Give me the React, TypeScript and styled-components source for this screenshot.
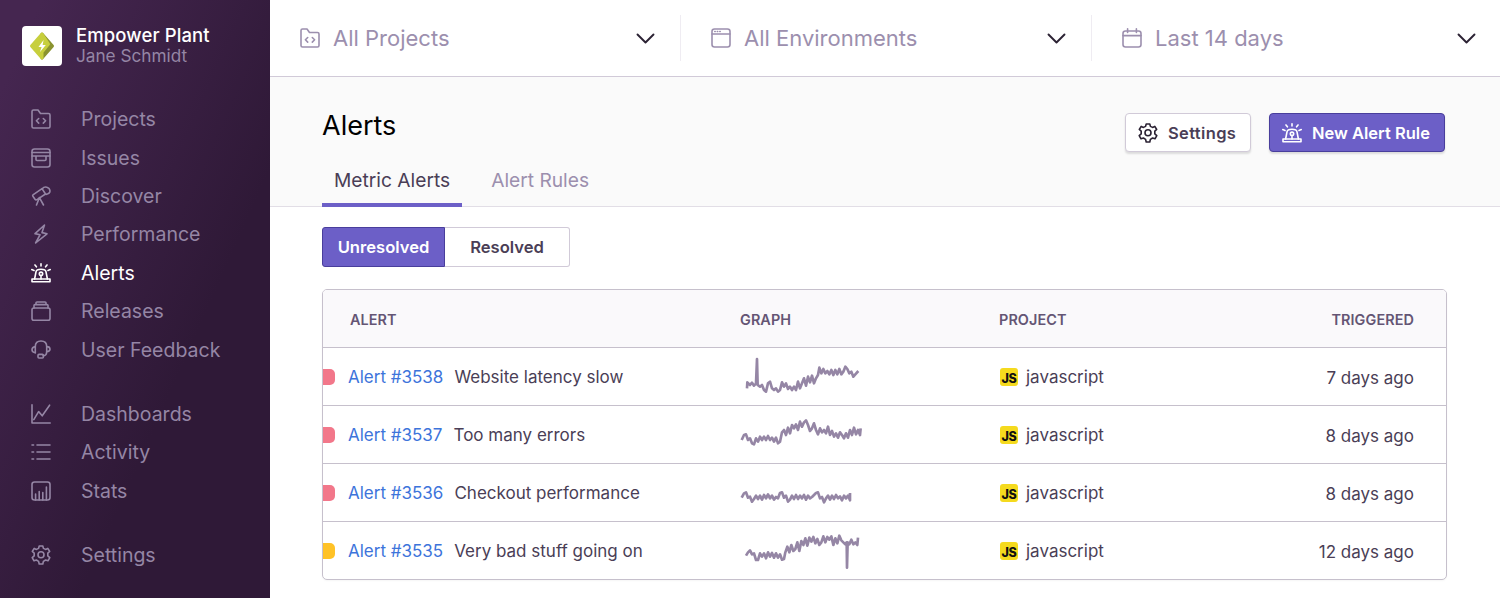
import React from "react";
import styled, { createGlobalStyle } from "styled-components";

const Global = createGlobalStyle`
  html, body { margin: 0; padding: 0; background: #fff; overflow: hidden; }
  * { box-sizing: border-box; }
  body { font-family: Inter, "Liberation Sans", sans-serif; }
`;

const Shell = styled.div`
  display: grid;
  grid-template-columns: 270px 1fr;
  height: 100vh;
  overflow: hidden;
`;

const Sidebar = styled.aside`
  background: linear-gradient(294deg, #2f1937 35.6%, #452650 92.4%);
  padding: 25px 0 0 22px;
  display: flex;
  flex-direction: column;
`;

const OrgHeader = styled.div`
  display: flex;
  align-items: center;
  gap: 14px;
  margin-bottom: 34px;
`;

const LogoBox = styled.div`
  width: 40px;
  height: 40px;
  background: #fff;
  border-radius: 4px;
  display: flex;
  align-items: center;
  justify-content: center;
`;

const OrgText = styled.div`
  display: flex;
  flex-direction: column;
`;

const OrgName = styled.div`
  color: #fff;
  font-size: 18.5px;
  font-weight: 500;
  line-height: 20px;
  letter-spacing: 0.1px;
`;

const OrgUser = styled.div`
  color: #9586a5;
  font-size: 17.2px;
  line-height: 21px;
`;

const NavGroup = styled.nav`
  display: flex;
  flex-direction: column;
  margin-bottom: 26px;
`;

const NavItem = styled.a<{ $active?: boolean }>`
  height: 38.4px;
  display: flex;
  align-items: center;
  gap: 30px;
  padding-left: 9px;
  font-size: 19.5px;
  color: ${(p) => (p.$active ? "#fff" : "#9586a5")};
`;

const NavIcon = styled.svg`
  width: 20px;
  height: 20px;
  flex: none;
  fill: none;
  stroke: currentColor;
  stroke-width: 1.6;
  stroke-linecap: round;
  stroke-linejoin: round;
`;

const Main = styled.main`
  display: flex;
  flex-direction: column;
  min-width: 0;
`;

const TopBar = styled.header`
  height: 77px;
  flex: none;
  display: grid;
  grid-template-columns: 411px 411px 1fr;
  align-items: center;
  background: #fff;
  border-bottom: 1px solid #d1cad8;
`;

const Selector = styled.div<{ $last?: boolean }>`
  height: 46px;
  display: flex;
  align-items: center;
  padding: 0 ${(p) => (p.$last ? "24px" : "25px")} 0 30px;
  gap: 13px;
  border-right: ${(p) => (p.$last ? "none" : "1px solid #efecf2")};
  color: #9c8fae;
`;

const SelectorLabel = styled.span`
  flex: 1;
  font-size: 22px;
  color: #9c8fae;
`;

const Chevron = styled.svg`
  width: 19px;
  height: 11px;
  fill: none;
  stroke: #2b2233;
  stroke-width: 1.9;
  stroke-linecap: round;
  stroke-linejoin: round;
`;

const PageHead = styled.section`
  height: 130px;
  flex: none;
  background: #fafafa;
  border-bottom: 1px solid #e2dee6;
  padding: 0 55px 0 52px;
  display: flex;
  flex-direction: column;
  justify-content: space-between;
`;

const TitleRow = styled.div`
  display: flex;
  align-items: flex-start;
  justify-content: space-between;
  height: 76px;
`;

const Title = styled.h1`
  margin: 31px 0 0;
  font-size: 27px;
  line-height: 36px;
  font-weight: 400;
  color: #000;
`;

const Actions = styled.div`
  display: flex;
  gap: 18px;
  align-items: center;
  margin-top: 36px;
`;

const Button = styled.button<{ $primary?: boolean }>`
  height: 39px;
  display: flex;
  align-items: center;
  gap: 10px;
  padding: 0 12px;
  width: ${(p) => (p.$primary ? "176px" : "126px")};
  white-space: nowrap;
  border-radius: 4px;
  font-family: inherit;
  font-size: 16.5px;
  font-weight: 600;
  letter-spacing: ${(p) => (p.$primary ? "0" : "0.35px")};
  border: 1px solid ${(p) => (p.$primary ? "#493e9c" : "#d1cad8")};
  background: ${(p) => (p.$primary ? "#6c5fc7" : "#fff")};
  color: ${(p) => (p.$primary ? "#fff" : "#4a3e56")};
  box-shadow: 0 2px 2px rgba(0, 0, 0, 0.12);
`;

const ButtonIcon = styled(NavIcon)<{ $dark?: boolean }>`
  color: ${(p) => (p.$dark ? "#2b2233" : "#fff")};
  stroke-width: 1.6;
`;

const Tabs = styled.div`
  display: flex;
  gap: 17px;
`;

const Tab = styled.div<{ $active?: boolean }>`
  height: 44px;
  padding: 4px 12px 0;
  font-size: 19.2px;
  line-height: 26px;
  color: ${(p) => (p.$active ? "#4a3e56" : "#9c8fae")};
  border-bottom: 4px solid ${(p) => (p.$active ? "#6c5fc7" : "transparent")};
  margin-bottom: -1px;
`;

const Content = styled.section`
  flex: 1;
  background: #fff;
  padding: 20px 53px 0 52px;
`;

const Segmented = styled.div`
  display: flex;
  width: 248px;
  margin-bottom: 22px;
`;

const Segment = styled.div<{ $active?: boolean }>`
  flex: ${(p) => (p.$active ? "0 0 123px" : "1")};
  height: 40px;
  display: flex;
  align-items: center;
  justify-content: center;
  font-size: 16.6px;
  font-weight: 600;
  color: ${(p) => (p.$active ? "#fff" : "#4a3e56")};
  background: ${(p) => (p.$active ? "#6c5fc7" : "#fff")};
  border: 1px solid ${(p) => (p.$active ? "#493e9c" : "#d1cad8")};
  border-radius: ${(p) => (p.$active ? "3px 0 0 3px" : "0 3px 3px 0")};
  ${(p) => !p.$active && "border-left: none;"}
`;

const Table = styled.div`
  border: 1px solid #c6c0cc;
  border-radius: 5px;
  overflow: hidden;
  background: #fff;
  box-shadow: 0 1px 2px rgba(0, 0, 0, 0.04);
`;

const HeaderRow = styled.div`
  display: grid;
  grid-template-columns: 417px 259px 1fr auto;
  height: 57px;
  align-items: center;
  padding: 2px 32px 0 0;
  background: #faf9fb;
  font-size: 14.4px;
  font-weight: 600;
  color: #645574;
  letter-spacing: 0.1px;
`;

const HeaderFirst = styled.div`
  padding-left: 27px;
`;

const Row = styled.div`
  display: grid;
  grid-template-columns: 417px 259px 1fr auto;
  height: 58px;
  align-items: center;
  padding: 0 32px 0 0;
  border-top: 1px solid #c6c0cc;
  font-size: 17px;
  color: #4a3e56;
`;

const AlertCell = styled.div`
  display: flex;
  align-items: center;
`;

const Pill = styled.span<{ $tone: string }>`
  width: 12px;
  height: 16px;
  border-radius: 0 5px 5px 0;
  background: ${(p) => p.$tone};
  margin-right: 13px;
`;

const AlertLink = styled.a`
  color: #3d74db;
  margin-right: 11px;
`;

const Spark = styled.svg`
  display: block;
  width: 130px;
  height: 58px;
  fill: none;
  stroke: #9586a5;
  stroke-width: 8;
  stroke-linejoin: round;
`;

const ProjectCell = styled.div`
  display: flex;
  align-items: center;
  gap: 8px;
  padding-left: 1px;
`;

const TimeCell = styled.div`
  padding-top: 2px;
`;

const JsBadge = styled.span`
  width: 18px;
  height: 18px;
  border-radius: 3px;
  background: #f5da1e;
  color: #111;
  font-size: 12.5px;
  font-weight: 800;
  display: flex;
  align-items: flex-end;
  justify-content: center;
  line-height: 15px;
  letter-spacing: -0.3px;
`;

const Logo = () => (
  <svg width="28" height="30" viewBox="0 0 28 30">
    <path d="M14 3 L24.5 15 L14 27 Z" fill="#8a9330" stroke="#8a9330" strokeWidth="3" strokeLinejoin="round" />
    <path d="M14 3 L3.5 15 L14 27 L14 21 L20.5 13 Z" fill="#c7cf3d" stroke="#c7cf3d" strokeWidth="3" strokeLinejoin="round" />
    <path d="M15.6 9 L10.5 16 H13.6 L12 21 L17.8 14 H14.6 Z" fill="#fff" />
  </svg>
);

const icons: Record<string, React.ReactNode> = {
  projects: (
    <>
      <path d="M1 2.5 Q1 1 2.5 1 H7 L9.5 4.5 H17.5 Q19 4.5 19 6 V17.5 Q19 19 17.5 19 H2.5 Q1 19 1 17.5 Z" />
      <path d="M7.7 9.5 L5.4 11.8 L7.7 14.1 M12.3 9.5 L14.6 11.8 L12.3 14.1" />
    </>
  ),
  issues: (
    <>
      <rect x="1" y="1" width="18" height="18" rx="2.5" />
      <path d="M1 4.5 H19 M1 8 H19 M5 8 V11.5 Q5 12.5 6 12.5 H14 Q15 12.5 15 11.5 V8" />
    </>
  ),
  discover: (
    <>
      <path d="M2.3 8.6 L11 2.6 L14.5 8 L6 13.6 Q4.8 14.3 4 13.2 L1.9 10.2 Q1.3 9.2 2.3 8.6 Z" />
      <path d="M11.3 2.8 Q13 0.5 15.8 1.2 Q18.8 2 19 5 Q19 7.6 15 8.4" />
      <path d="M8.4 11.6 L12.5 19 M8.4 11.6 L5.5 19" />
    </>
  ),
  performance: (
    <>
      <path d="M13.5 1 L4 9.6 L9 10.8 L4.6 19 L16 9.8 L11 8.6 Z" />
    </>
  ),
  alerts: (
    <>
      <path d="M1 18.8 H19 V16 H1 Z" />
      <path d="M3.6 16 L5 8.8 Q5.5 6.2 10 6.2 Q14.5 6.2 15 8.8 L16.4 16" />
      <circle cx="10" cy="10.8" r="1.7" />
      <path d="M10 12.5 V16 M10 0.8 V3 M4 2 L5.4 3.8 M16 2 L14.6 3.8 M0.8 6.6 L3 7.4 M19.2 6.6 L17 7.4" />
    </>
  ),
  releases: (
    <>
      <rect x="1" y="7" width="18" height="12.4" rx="1.8" />
      <path d="M3 7 V4.6 Q3 3.6 4 3.6 H16 Q17 3.6 17 4.6 V7 M5 3.6 V1.8 Q5 1 6 1 H14 Q15 1 15 1.8 V3.6" />
    </>
  ),
  feedback: (
    <>
      <path d="M4.3 12.8 V6.5 Q4.3 1 10 1 Q15.7 1 15.7 6.5 V11.5 Q15.7 15.8 12 15.8" />
      <path d="M4.3 6.6 Q1 7.2 1 9.7 Q1 12.2 4.3 12.8 M15.7 6.6 Q19 6.6 19 9.2 Q19 11.4 15.7 11.6" />
      <rect x="7" y="14.4" width="5.4" height="3.6" rx="1" />
    </>
  ),
  dashboards: (
    <>
      <path d="M1 0.8 V19 H19.2" />
      <path d="M2.8 15.6 L7.6 7.6 L11.2 11.8 L18.6 1.2" />
    </>
  ),
  activity: (
    <>
      <path d="M6 3 H19 M6 10 H19 M6 17 H19 M1 3 H2.6 M1 10 H2.6 M1 17 H2.6" />
    </>
  ),
  stats: (
    <>
      <rect x="1" y="1" width="18" height="18" rx="2.5" />
      <path d="M4.6 19 V13 M8.2 19 V10.5 M11.8 19 V11.6 M15.4 19 V6" />
    </>
  ),
  settings: (
    <>
      <path d="M8.2 1 H11.8 L12.4 3.4 L14.5 4.4 L16.8 3.4 L18.7 6.5 L16.8 8.2 V10.8 L18.8 12.6 L17 15.8 L14.6 15 L12.4 16.4 L11.8 19 H8.2 L7.6 16.4 L5.4 15 L3 15.8 L1.2 12.6 L3.2 10.8 V8.2 L1.3 6.5 L3.2 3.4 L5.5 4.4 L7.6 3.4 Z" />
      <circle cx="10" cy="9.8" r="3" />
    </>
  ),
  window: (
    <>
      <rect x="1" y="1" width="18" height="18" rx="2.5" />
      <path d="M1 6 H19 M3.8 3.5 H4.2 M6.3 3.5 H6.7 M8.8 3.5 H9.2" />
    </>
  ),
  calendar: (
    <>
      <rect x="1" y="3" width="18" height="16" rx="2.5" />
      <path d="M1 7.6 H19 M5.6 0.8 V4.4 M14.4 0.8 V4.4" />
    </>
  ),
};

const primaryNav = [
  ["projects", "Projects"],
  ["issues", "Issues"],
  ["discover", "Discover"],
  ["performance", "Performance"],
  ["alerts", "Alerts"],
  ["releases", "Releases"],
  ["feedback", "User Feedback"],
];
const secondaryNav = [
  ["dashboards", "Dashboards"],
  ["activity", "Activity"],
  ["stats", "Stats"],
];

const spark1 =
  "51,130 52,112 60,120 66,113 72,122 78,116 81,42 83,120 90,125 96,120 102,135 108,140 114,115 120,110 126,130 132,135 138,130 144,140 150,135 156,112 162,125 168,115 174,132 180,125 186,135 192,125 198,135 204,110 210,130 216,115 222,100 228,122 234,95 240,112 246,92 252,115 258,100 264,90 268,68 274,85 280,72 286,85 292,78 298,88 304,75 310,90 316,75 322,88 328,72 334,88 340,80 346,65 352,72 358,85 364,80 370,95 376,88 385,78";
const spark2 =
  "35,285 42,270 48,268 54,285 60,280 66,295 72,298 78,280 84,290 90,275 96,285 102,275 108,285 114,273 120,285 126,278 132,290 138,278 144,295 150,290 156,262 162,255 168,270 174,248 180,265 186,240 192,250 198,238 204,255 210,230 216,245 222,232 228,226 234,240 240,258 246,250 252,235 258,255 264,268 270,250 276,262 282,255 288,265 294,245 300,270 306,258 312,275 318,265 324,278 330,262 336,270 342,280 348,265 354,278 360,255 366,270 372,248 378,268 384,255 390,270 392,250";
const spark3 =
  "35,98 42,85 48,82 54,98 60,95 66,110 72,102 78,92 84,102 90,92 96,104 102,90 108,100 114,88 120,100 126,92 132,104 138,96 144,100 150,84 156,82 162,98 168,92 174,110 180,104 186,92 192,102 198,90 204,102 210,92 216,100 222,90 228,104 234,92 240,100 246,96 252,90 258,84 264,82 270,100 276,96 282,112 288,100 294,92 300,104 306,92 312,102 318,90 324,100 330,94 336,106 342,92 348,100 354,92 360,106 360,84";
const spark4 =
  "48,272 54,262 60,256 66,268 72,265 78,285 84,285 90,265 96,275 102,265 108,280 114,262 120,275 126,264 132,278 138,265 144,278 150,268 156,284 162,282 166,262 172,245 178,262 184,240 190,258 196,252 202,232 208,258 214,228 220,240 226,220 232,242 238,218 244,230 250,216 256,235 262,222 268,240 274,232 280,214 286,232 292,216 298,224 304,214 310,240 316,220 322,235 328,212 334,226 340,232 346,238 350,232 351,308 353,232 358,238 364,224 370,238 376,232 382,240 384,218";

const rows = [
  { tone: "#f2778a", id: "Alert #3538", name: "Website latency slow", spark: spark1, top: 9, ago: "7 days ago" },
  { tone: "#f2778a", id: "Alert #3537", name: "Too many errors", spark: spark2, top: 183, ago: "8 days ago" },
  { tone: "#f2778a", id: "Alert #3536", name: "Checkout performance", spark: spark3, top: -3, ago: "8 days ago" },
  { tone: "#ffc227", id: "Alert #3535", name: "Very bad stuff going on", spark: spark4, top: 171, ago: "12 days ago" },
];

export default function App() {
  return (
    <Shell>
      <Global />
      <Sidebar>
        <OrgHeader>
          <LogoBox>
            <Logo />
          </LogoBox>
          <OrgText>
            <OrgName>Empower Plant</OrgName>
            <OrgUser>Jane Schmidt</OrgUser>
          </OrgText>
        </OrgHeader>
        <NavGroup>
          {primaryNav.map(([k, label]) => (
            <NavItem key={k} $active={k === "alerts"}>
              <NavIcon viewBox="0 0 20 20">{icons[k]}</NavIcon>
              {label}
            </NavItem>
          ))}
        </NavGroup>
        <NavGroup>
          {secondaryNav.map(([k, label]) => (
            <NavItem key={k}>
              <NavIcon viewBox="0 0 20 20">{icons[k]}</NavIcon>
              {label}
            </NavItem>
          ))}
        </NavGroup>
        <NavGroup>
          <NavItem>
            <NavIcon viewBox="0 0 20 20">{icons.settings}</NavIcon>
            Settings
          </NavItem>
        </NavGroup>
      </Sidebar>
      <Main>
        <TopBar>
          {[
            ["projects", "All Projects"],
            ["window", "All Environments"],
            ["calendar", "Last 14 days"],
          ].map(([k, label], i) => (
            <Selector key={k} $last={i === 2}>
              <NavIcon viewBox="0 0 20 20">{icons[k]}</NavIcon>
              <SelectorLabel>{label}</SelectorLabel>
              <Chevron viewBox="0 0 19 11">
                <path d="M1.5 1.5 L9.5 9.5 L17.5 1.5" />
              </Chevron>
            </Selector>
          ))}
        </TopBar>
        <PageHead>
          <TitleRow>
            <Title>Alerts</Title>
            <Actions>
              <Button>
                <ButtonIcon $dark viewBox="0 0 20 20">
                  {icons.settings}
                </ButtonIcon>
                Settings
              </Button>
              <Button $primary>
                <ButtonIcon viewBox="0 0 20 20">{icons.alerts}</ButtonIcon>
                New Alert Rule
              </Button>
            </Actions>
          </TitleRow>
          <Tabs>
            <Tab $active>Metric Alerts</Tab>
            <Tab>Alert Rules</Tab>
          </Tabs>
        </PageHead>
        <Content>
          <Segmented>
            <Segment $active>Unresolved</Segment>
            <Segment>Resolved</Segment>
          </Segmented>
          <Table>
            <HeaderRow>
              <HeaderFirst>ALERT</HeaderFirst>
              <div>GRAPH</div>
              <div>PROJECT</div>
              <div>TRIGGERED</div>
            </HeaderRow>
            {rows.map((r) => (
              <Row key={r.id}>
                <AlertCell>
                  <Pill $tone={r.tone} />
                  <AlertLink>{r.id}</AlertLink>
                  {r.name}
                </AlertCell>
                <Spark viewBox={`30 ${r.top} 390 174`}>
                  <polyline points={r.spark} />
                </Spark>
                <ProjectCell>
                  <JsBadge>JS</JsBadge>
                  javascript
                </ProjectCell>
                <TimeCell>{r.ago}</TimeCell>
              </Row>
            ))}
          </Table>
        </Content>
      </Main>
    </Shell>
  );
}
